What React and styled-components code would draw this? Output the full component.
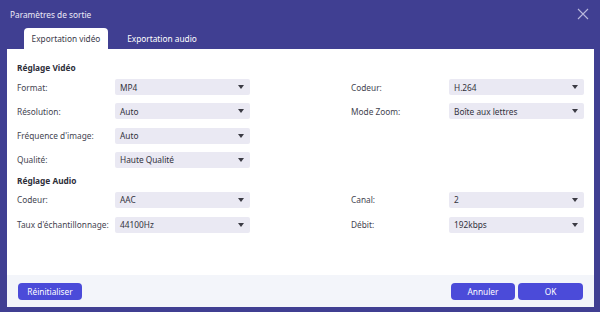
import React from 'react';
import styled, { createGlobalStyle } from 'styled-components';

const GlobalStyle = createGlobalStyle`
  html, body {
    margin: 0;
    padding: 0;
    background: #403f92;
  }
  body {
    font-family: 'Noto Sans', 'Open Sans', sans-serif;
  }
`;

const Dialog = styled.div`
  width: 600px;
  height: 312px;
  background: #403f92;
  display: flex;
  flex-direction: column;
  box-sizing: border-box;
  font-size: 8.3px;
`;

const TitleBar = styled.div`
  height: 28px;
  display: flex;
  align-items: center;
  justify-content: space-between;
  padding: 0 11px 0 10px;
  color: #ecebf7;
`;

const Close = styled.button`
  border: 0;
  background: none;
  padding: 0;
  width: 12px;
  height: 12px;
  display: flex;
  cursor: pointer;
`;

const Tabs = styled.div`
  height: 21px;
  display: flex;
  padding-left: 24px;
  gap: 4px;
`;

const Tab = styled.div`
  width: ${(p) => (p.$active ? '84px' : '100px')};
  display: flex;
  align-items: center;
  justify-content: center;
  border-radius: 4px 4px 0 0;
  background: ${(p) => (p.$active ? '#ffffff' : 'transparent')};
  color: ${(p) => (p.$active ? '#3a3a4a' : '#ffffff')};
`;

const Panel = styled.div`
  margin: 0 6px 5px 7px;
  flex: 1;
  display: flex;
  flex-direction: column;
  background: #ffffff;
`;

const Content = styled.div`
  flex: 1;
  padding: 12px 10px 0 10px;
`;

const SectionTitle = styled.div`
  font-weight: 700;
  line-height: 14px;
  color: #2e2e3a;
  margin-top: ${(p) => p.$top || 0}px;
  margin-bottom: 4px;
`;

const Grid = styled.div`
  display: grid;
  grid-template-columns: 98px 135px 101px 98px 135px;
  grid-auto-rows: 16px;
  row-gap: ${(p) => p.$gap}px;
`;

const Label = styled.div`
  grid-column: ${(p) => p.$col};
  color: #444450;
  display: flex;
  align-items: center;
  white-space: nowrap;
`;

const Select = styled.div`
  grid-column: ${(p) => p.$col};
  background: #eae9f3;
  border-radius: 2px;
  display: flex;
  align-items: center;
  justify-content: space-between;
  padding: 0 6px 0 5px;
  color: #33333d;
`;

const Caret = styled.span`
  width: 0;
  height: 0;
  border-left: 3px solid transparent;
  border-right: 3px solid transparent;
  border-top: 4px solid #3b3b44;
`;

const Footer = styled.div`
  height: 32px;
  background: #f3f5fa;
  display: flex;
  align-items: center;
  padding: 0 11px 0 11px;
  gap: 3px;
`;

const Button = styled.button`
  height: 17px;
  width: ${(p) => p.$w}px;
  border: 0;
  border-radius: 4px;
  background: #4b4bd9;
  color: #ffffff;
  font-family: 'Noto Sans', 'Open Sans', sans-serif;
  font-size: 8.3px;
  padding: 0;
  margin-left: ${(p) => (p.$push ? 'auto' : '0')};
`;

const Field = ({ label, value, side }) => (
  <>
    <Label $col={side === 'right' ? 4 : 1}>{label}</Label>
    <Select $col={side === 'right' ? 5 : 2}>
      <span>{value}</span>
      <Caret />
    </Select>
  </>
);

const Spacer = ({ row }) => <div style={{ gridColumn: '4 / 6', gridRow: row }} />;

export default function App() {
  return (
    <Dialog>
      <GlobalStyle />
      <TitleBar>
        <span>Paramètres de sortie</span>
        <Close aria-label="Fermer">
          <svg width="12" height="12" viewBox="0 0 12 12">
            <path d="M1 1L11 11M11 1L1 11" stroke="#b9b8dc" strokeWidth="1.1" />
          </svg>
        </Close>
      </TitleBar>
      <Tabs>
        <Tab $active>Exportation vidéo</Tab>
        <Tab>Exportation audio</Tab>
      </Tabs>
      <Panel>
        <Content>
          <SectionTitle>Réglage Vidéo</SectionTitle>
          <Grid $gap={8.3}>
            <Field label="Format:" value="MP4" />
            <Field label="Codeur:" value="H.264" side="right" />
            <Field label="Résolution:" value="Auto" />
            <Field label="Mode Zoom:" value="Boîte aux lettres" side="right" />
            <Field label="Fréquence d'image:" value="Auto" />
            <Spacer row={3} />
            <Field label="Qualité:" value="Haute Qualité" />
          </Grid>
          <SectionTitle $top={6}>Réglage Audio</SectionTitle>
          <Grid $gap={9}>
            <Field label="Codeur:" value="AAC" />
            <Field label="Canal:" value="2" side="right" />
            <Field label="Taux d'échantillonnage:" value="44100Hz" />
            <Field label="Débit:" value="192kbps" side="right" />
          </Grid>
        </Content>
        <Footer>
          <Button $w={64}>Réinitialiser</Button>
          <Button $w={64} $push>Annuler</Button>
          <Button $w={65}>OK</Button>
        </Footer>
      </Panel>
    </Dialog>
  );
}
